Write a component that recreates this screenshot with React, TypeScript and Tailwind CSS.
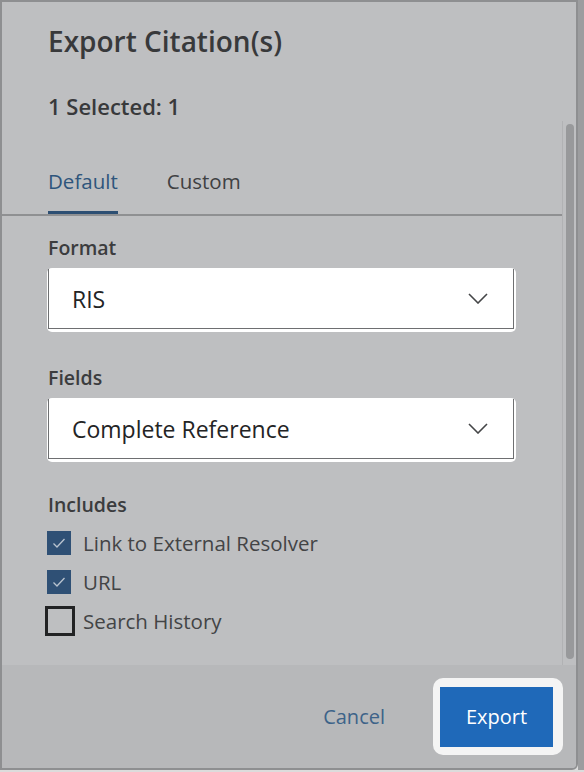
import React from 'react';

const Chevron = () => (
  <svg width="20" height="11" viewBox="0 0 20 11" fill="none">
    <path d="M1 1 L10 10 L19 1" stroke="#454648" strokeWidth="1.6" />
  </svg>
);

const Check = () => (
  <svg width="14" height="12" viewBox="0 0 14 12" fill="none">
    <path d="M1.5 6.5 L5 10 L12.5 2" stroke="#b9c3cf" strokeWidth="1.3" />
  </svg>
);

const SelectBox: React.FC<{ value: string }> = ({ value }) => (
  <div className="-ml-[1px] w-[469px] rounded-[5px] bg-white pt-[1px] pl-[1px] pr-[2px] pb-[3px]">
    <div className="flex h-[60px] items-center justify-between border border-t-0 border-[#6e6f71] pl-[23px] pr-[25px]">
      <span className="text-[23px] leading-[30px] text-[#232425]">{value}</span>
      <Chevron />
    </div>
  </div>
);

const CheckRow: React.FC<{ label: string; checked: boolean }> = ({ label, checked }) => (
  <div className="flex h-[39px] items-center">
    {checked ? (
      <div className="-ml-[1px] mr-[1px] flex h-[24px] w-[24px] items-center justify-center bg-[#2f5075]">
        <Check />
      </div>
    ) : (
      <div className="-ml-[3px] -mr-[3px] h-[30px] w-[30px] border-[3px] border-[#222324]" />
    )}
    <span className="ml-[11px] text-[20.5px] leading-[28px] text-[#434446]">{label}</span>
  </div>
);

export default function App() {
  return (
    <div className="flex h-[772px] w-[584px] flex-col bg-[#dcdcdc] font-['Open_Sans',sans-serif]">
      <div className="flex h-[770px]">
        {/* dialog */}
        <div className="flex h-full w-[578px] flex-col overflow-hidden rounded-br-[6px] border-2 border-[#8e8f91] bg-[#bebfc1]">
          {/* header */}
          <div className="h-[119px] shrink-0 pl-[46px] pt-[21px]">
            <h1 className="text-[28px] font-semibold leading-[36px] text-[#38393b]">Export Citation(s)</h1>
            <p className="mt-[33px] text-[22px] font-semibold leading-[28px] text-[#38393b]">1 Selected: 1</p>
          </div>

          {/* scroll area */}
          <div className="flex flex-1 overflow-hidden">
            <div className="flex-1">
              <div className="flex gap-[49px] border-b-2 border-[#8f9092] pl-[46px] pt-[46px]">
                <div className="border-b-[3px] border-[#2d4f73] pb-[16px] text-[20.5px] leading-[28px] text-[#2e557c]">
                  Default
                </div>
                <div className="pb-[19px] text-[20.5px] leading-[28px] text-[#404143]">Custom</div>
              </div>

              <div className="pl-[46px] pt-[18px]">
                <div className="text-[19.5px] font-semibold leading-[28px] text-[#3b3c3e]">Format</div>
                <div className="mt-[6px]">
                  <SelectBox value="RIS" />
                </div>

                <div className="mt-[32px] text-[19.5px] font-semibold leading-[28px] text-[#3b3c3e]">Fields</div>
                <div className="mt-[6px]">
                  <SelectBox value="Complete Reference" />
                </div>

                <div className="mt-[29px] text-[19.5px] font-semibold leading-[28px] text-[#3b3c3e]">Includes</div>
                <div className="mt-[4px] flex flex-col">
                  <CheckRow label="Link to External Resolver" checked />
                  <CheckRow label="URL" checked />
                  <CheckRow label="Search History" checked={false} />
                </div>
              </div>
            </div>

            {/* scrollbar */}
            <div className="w-[14px] border-l border-[#b1b2b4] pl-[3px] pt-[3px] pb-[6px]">
              <div className="h-full w-[8px] rounded-full bg-[#98999b]" />
            </div>
          </div>

          {/* footer */}
          <div className="flex h-[103px] shrink-0 items-center justify-end bg-[#b7b8ba] pr-[13px]">
            <button className="text-[20px] leading-[28px] text-[#3d6389]">Cancel</button>
            <div className="ml-[48px] rounded-[10px] bg-[#f4f4f4] pt-[9px] pb-[8px] pl-[7px] pr-[10px]">
              <button className="h-[60px] w-[113px] bg-[#1f69b9] text-[20px] leading-[28px] text-white">
                Export
              </button>
            </div>
          </div>
        </div>

        {/* page behind */}
        <div className="flex-1 bg-[#9c9d9f]" />
      </div>
    </div>
  );
}
